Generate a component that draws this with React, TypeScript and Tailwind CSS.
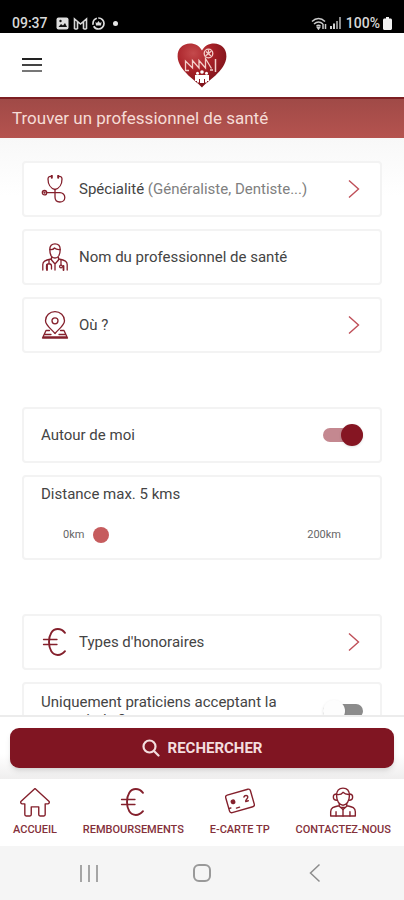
import { useState } from "react";
import type { ReactNode } from "react";

const HeartLogo = () => (
  <svg viewBox="0 0 50 45" className="h-[45px] w-[50px]" role="img" aria-label="Logo">
    <defs>
      <radialGradient id="heart" cx="32%" cy="22%" r="75%">
        <stop offset="0" stopColor="#c44a4c" />
        <stop offset="0.5" stopColor="#a92128" />
        <stop offset="1" stopColor="#7f141b" />
      </radialGradient>
    </defs>
    <path
      d="M25 44.5C21 39 1 28 .6 13.5.4 5.500 6 .6 13 .6c5.500 0 9.500 2.600 12 7 2.500-4.400 6.500-7 12-7 7 0 12.600 4.900 12.400 12.900C49 28 29 39 25 44.500z"
      fill="url(#heart)"
    />
    <g fill="none" stroke="#f3cfca" strokeWidth="1.300">
      <path d="M8.500 27.500V18l7 7v-7.500l6.500 7.500v-7.500l6.500 7.500V15.500l6 10" />
      <path d="M38.500 16v13" strokeWidth="1.500" />
      <path d="M8 27.500h4M33 27h3" />
      <circle cx="31.500" cy="10.500" r="4.300" />
      <path d="M28.500 13l6-5M29 8.500l5 4.500M31.500 6.500v4" />
    </g>
    <g fill="#fff">
      <circle cx="20.500" cy="30.200" r="1.500" />
      <circle cx="25" cy="29" r="1.800" />
      <circle cx="29.500" cy="30.200" r="1.500" />
      <path d="M18 32h14v6h-2v1.500h-2V36h-1v4h-4v-4h-1v3.500h-2V38h-2z" />
    </g>
  </svg>
);

const Icon = ({ children, className = "h-7 w-7" }: { children: ReactNode; className?: string }) => (
  <svg
    viewBox="0 0 28 28"
    className={`${className} shrink-0`}
    fill="none"
    stroke="#84202c"
    strokeWidth="1.300"
    strokeLinecap="round"
    strokeLinejoin="round"
    aria-hidden="true"
  >
    {children}
  </svg>
);

const StethoscopeIcon = () => (
  <Icon>
    <path d="M10.500 1.500c-2-.6-3.500.4-3.500 2.500 0 5 2.500 9.500 7 10.500 4.500-1 7-5.500 7-10.500 0-2.100-1.500-3.100-3.500-2.500" />
    <path d="M10.800.8v2M17.200.8v2" strokeWidth="2" />
    <path d="M14 14.500v7.500c0 3 2 5 4.800 5s5-2 5-4.600-2.200-4.700-4.800-4.700H5.500" />
    <circle cx="3.500" cy="17.700" r="2.200" />
    <circle cx="3.500" cy="17.700" r=".5" />
  </Icon>
);

const DoctorIcon = () => (
  <Icon>
    <path d="M8.800 6.500C8.800 2.700 10.800.8 14 .8s5.200 1.900 5.200 5.700c0 5-2 8.500-5.200 8.500s-5.200-3.500-5.200-8.500z" />
    <path d="M9 6.500c2 .3 3.500-.2 4.500-1.500 1.200 1.200 3 1.700 5.500 1.500" />
    <path d="M1.800 27v-5.500c0-3 2-4.200 8.400-5.500M26.200 27v-5.500c0-3-2-4.200-8.400-5.500" />
    <path d="M10.500 14.500V17l3.500 4 3.500-4v-2.500M14 21v6" />
    <path d="M8 17v3.500M5.500 26v-3c0-3 5-3 5 0v3M20 17v5" />
    <path d="M6 27v-5M22.500 27v-4" strokeWidth="1.800" />
    <circle cx="20" cy="23.500" r="1.400" />
  </Icon>
);

const PlaceIcon = () => (
  <Icon>
    <path d="M14 22.500C11 18.500 4.500 14.500 4.500 9.700a9.500 9 0 0119 0c0 4.800-6.500 8.800-9.500 12.800z" />
    <circle cx="14" cy="9.800" r="3" />
    <path d="M8.500 19.500H5L1.500 27h25L23 19.500h-3.500M4 23.500h6M18 23.500h6M2 26h24" />
  </Icon>
);

const EuroIcon = () => (
  <Icon>
    <path d="M24 4.800C22 2.300 19.700 1 16.800 1 11.200 1 8 6.500 8 14s3.200 13 8.800 13c2.900 0 5.200-1.300 7.200-3.800" strokeWidth="1.900" />
    <path d="M2.500 11.500h13.500M2.500 16.500h13.500" />
  </Icon>
);

const HomeIcon = () => (
  <Icon className="h-[30px] w-[30px]">
    <path d="M14 1.500L.8 13.500c-.4 1 .2 2.300 1.400 2.200h2.300v10c0 .8.400 1.300 1.200 1.300h3.600c.8 0 1.200-.5 1.200-1.300v-7.200h7v7.200c0 .8.400 1.300 1.200 1.300h3.600c.8 0 1.200-.5 1.200-1.300v-10h2.300c1.200.1 1.800-1.200 1.400-2.200z" />
  </Icon>
);

const CardIcon = () => (
  <Icon className="h-[30px] w-[30px]">
    <g transform="rotate(-16 14 13)">
      <rect x="2" y="4.500" width="24" height="17" rx="2" />
      <circle cx="7.500" cy="12" r="1.600" fill="#84202c" />
      <path d="M18.500 10.500c1-1.500 4-1 3.500 1s-3 1.500-3 3.500h2.500M2.500 17h1.500M9 18.500h3" />
    </g>
  </Icon>
);

const AdvisorIcon = () => (
  <Icon className="h-[30px] w-[30px]">
    <path d="M8 8C8 3.500 10.300 1 14 1s6 2.500 6 7c0 5-2.500 9-6 9s-6-4-6-9z" />
    <path d="M8 7c3 .5 5-.5 6-2 1.500 1.500 3.500 2.200 6 2" />
    <path d="M8 6.500c-2 0-3 1-3 2.800s1 3 3.300 3M20 6.500c2 0 3 1 3 2.800s-1 3-3.300 3" />
    <path d="M10.500 15.500V18L14 21l3.500-3v-2.500M10 17.500c-5 1-7.500 2-7.500 5.500v4h23v-4c0-3.500-2.500-4.500-7.500-5.500" />
    <path d="M7.500 23v4M20.500 23v4M14 21v6M12 19h4" />
  </Icon>
);

const Chevron = () => (
  <svg viewBox="0 0 12 20" className="h-5 w-3 shrink-0" fill="none" stroke="#bf4f58" strokeWidth="1.400" aria-hidden="true">
    <path d="M1 1.500L10.500 10 1 18.500" />
  </svg>
);

const StatusBar = () => (
  <div className="flex h-[33px] shrink-0 items-end justify-between bg-black px-3 pb-[2px] text-sm leading-[16px] font-medium text-[#d8d8d8]">
    <div className="flex items-center gap-1">
      <span className="mr-1">09:37</span>
      <svg viewBox="0 0 13 13" className="h-[13px] w-[13px]" aria-hidden="true">
        <rect x=".5" y=".5" width="12" height="12" rx="2" fill="#dedede" />
        <path d="M2.500 10l2.500-3 2 1.500L9 6l2 4z" fill="#111" />
        <circle cx="4.500" cy="4" r="1.200" fill="#111" />
      </svg>
      <svg viewBox="0 0 15 13" className="h-[13px] w-[15px]" fill="none" stroke="#d8d8d8" strokeWidth="1.600" aria-hidden="true">
        <path d="M1.500 12V2l6 5 6-5v10M4.500 12V5M10.500 12V5M1.500 12h3M10.500 12h3" />
      </svg>
      <svg viewBox="0 0 13 13" className="h-[13px] w-[13px]" aria-hidden="true">
        <circle cx="6.500" cy="6.500" r="5.500" fill="none" stroke="#dedede" strokeWidth="1.700" strokeDasharray="14 1.500 8 1.500" />
        <path d="M3.500 5l1.500 1 1.500-2L8 6l1.500-1-.5 3.500H4z" fill="#dedede" />
      </svg>
      <span className="ml-1 h-[5px] w-[5px] rounded-full bg-[#e6e6e6]" />
    </div>
    <div className="flex items-center gap-[3px]">
      <svg viewBox="0 0 16 13" className="h-[13px] w-4" fill="none" stroke="#c9c9c9" strokeWidth="1.500" aria-hidden="true">
        <path d="M1 4.500c4-4 9-4 13 0M3 7c3-2.700 6-2.700 9 0M5.500 9.300c1.300-1.200 2.700-1.200 4 0" />
        <path d="M6.500 10.500h2L7.500 12zM12 7v5M14.500 12V7" />
      </svg>
      <svg viewBox="0 0 11 12" className="h-3 w-[11px]" aria-hidden="true">
        <path d="M0 9h2v3H0zM3 6.500h2V12H3z" fill="#d0d0d0" />
        <path d="M6 4h2v8H6zM9 0h2v12H9z" fill="#8a8a8a" />
      </svg>
      <span className="ml-[2px]">100%</span>
      <svg viewBox="0 0 9 13" className="h-[13px] w-[9px]" aria-hidden="true">
        <path d="M3 0h3v1.500h1.500c.8 0 1.500.7 1.500 1.500v8.500c0 .8-.7 1.500-1.500 1.500h-6C.7 13 0 12.300 0 11.500V3c0-.8.700-1.500 1.500-1.500H3z" fill="#f1f1f1" />
      </svg>
    </div>
  </div>
);

const Header = () => (
  <header className="grid h-16 shrink-0 grid-cols-3 items-center bg-white px-5">
    <button type="button" aria-label="Menu" className="flex w-6 flex-col gap-1 p-[2px]">
      <span className="h-[2px] w-5 bg-[#222]" />
      <span className="h-[2px] w-5 bg-[#444]" />
      <span className="h-[2px] w-5 bg-[#777]" />
    </button>
    <div className="flex justify-center">
      <HeartLogo />
    </div>
  </header>
);

const cardClass = "w-full rounded-[4px] border-2 border-[#f3f3f3] bg-white text-[15px] leading-5 text-[#444]";

type PickerProps = { icon: ReactNode; children: ReactNode };

const PickerRow = ({ icon, children }: PickerProps) => (
  <button type="button" className={`${cardClass} flex h-14 items-center gap-[10px] pr-5 pl-[17px] text-left`}>
    {icon}
    <span className="flex-1">{children}</span>
    <Chevron />
  </button>
);

type SwitchProps = { id: string; label: string; defaultChecked?: boolean };

const SwitchRow = ({ id, label, defaultChecked }: SwitchProps) => (
  <div className={`${cardClass} flex min-h-14 items-center justify-between px-[17px] py-[9px]`}>
    <label htmlFor={id} className="max-w-[250px] leading-[18px]">
      {label}
    </label>
    <input
      id={id}
      type="checkbox"
      defaultChecked={defaultChecked}
      className="flex h-[14px] w-10 shrink-0 appearance-none items-center rounded-full bg-[#8c8c8c] after:block after:h-[22px] after:w-[22px] after:shrink-0 after:rounded-full after:bg-[#fdfdfd] after:shadow-sm checked:bg-[#c48890] checked:after:ml-[18px] checked:after:bg-[#851522]"
    />
  </div>
);

const DistanceCard = () => {
  const [distance, setDistance] = useState(5);

  return (
    <div className={`${cardClass} flex h-[85px] flex-col gap-[23px] px-[17px] pt-[7px]`}>
      <label htmlFor="distance">Distance max. {distance} kms</label>
      <div className="flex items-center gap-1 px-[22px] text-[11px] leading-4 text-[#666]">
        <span>0km</span>
        <input
          id="distance"
          type="range"
          min={0}
          max={200}
          value={distance}
          onChange={(e) => setDistance(Number(e.target.value))}
          className="h-4 min-w-0 flex-1 appearance-none bg-transparent [&::-webkit-slider-thumb]:h-4 [&::-webkit-slider-thumb]:w-4 [&::-webkit-slider-thumb]:appearance-none [&::-webkit-slider-thumb]:rounded-full [&::-webkit-slider-thumb]:bg-[#c65c5e]"
        />
        <span>200km</span>
      </div>
    </div>
  );
};

const navItems = [
  { label: "ACCUEIL", icon: <HomeIcon /> },
  { label: "REMBOURSEMENTS", icon: <EuroIcon /> },
  { label: "E-CARTE TP", icon: <CardIcon /> },
  { label: "CONTACTEZ-NOUS", icon: <AdvisorIcon /> },
];

const BottomNav = () => (
  <nav className="flex h-[67px] shrink-0 justify-between bg-white px-[13px] pt-2">
    {navItems.map((item) => (
      <a key={item.label} href="#" className="flex flex-col items-center gap-1 text-[11px] leading-[18px] font-medium text-[#84303a]">
        <span className="flex h-[30px] items-center">{item.icon}</span>
        {item.label}
      </a>
    ))}
  </nav>
);

const SystemBar = () => (
  <div className="grid h-[54px] shrink-0 grid-cols-3 items-center justify-items-center bg-[#f5f5f5] px-8">
    <button type="button" aria-label="Applications récentes" className="flex gap-[6px]">
      <span className="h-[17px] w-[2px] bg-[#a5a5a5]" />
      <span className="h-[17px] w-[2px] bg-[#a5a5a5]" />
      <span className="h-[17px] w-[2px] bg-[#a5a5a5]" />
    </button>
    <button type="button" aria-label="Accueil du téléphone" className="h-[18px] w-[18px] rounded-[6px] border-2 border-[#999]" />
    <button type="button" aria-label="Retour">
      <svg viewBox="0 0 12 20" className="h-5 w-3" fill="none" stroke="#8c8c8c" strokeWidth="1.500" aria-hidden="true">
        <path d="M10.500 1.500L1.500 10l9 8.500" />
      </svg>
    </button>
  </div>
);

export default function App() {
  return (
    <div className="flex h-screen flex-col overflow-hidden bg-white font-[Roboto,'Liberation_Sans',sans-serif]">
      <StatusBar />
      <Header />
      <h1 className="h-[41px] shrink-0 border-t-2 border-[#7d1f22] bg-linear-to-b from-[#a04a47] to-[#b5534f] pl-3 text-[17px] leading-[38px] text-[#f6dcd6]">
        Trouver un professionnel de santé
      </h1>

      <main className="flex min-h-0 flex-1 flex-col gap-[54px] overflow-hidden bg-linear-to-b from-[#f8f8f8] to-white to-10% px-[22px] pt-[23px]">
        <section className="flex flex-col gap-3">
          <PickerRow icon={<StethoscopeIcon />}>
            Spécialité <span className="text-[#808080]">(Généraliste, Dentiste...)</span>
          </PickerRow>
          <div className={`${cardClass} flex h-14 items-center gap-[10px] pr-5 pl-[17px]`}>
            <DoctorIcon />
            <input
              type="text"
              aria-label="Nom du professionnel de santé"
              placeholder="Nom du professionnel de santé"
              className="min-w-0 flex-1 outline-none placeholder:text-[#444]"
            />
          </div>
          <PickerRow icon={<PlaceIcon />}>Où ?</PickerRow>
        </section>

        <section className="flex flex-col gap-3">
          <SwitchRow id="nearby" label="Autour de moi" defaultChecked />
          <DistanceCard />
        </section>

        <section className="flex flex-col gap-3">
          <PickerRow icon={<EuroIcon />}>Types d'honoraires</PickerRow>
          <SwitchRow id="vitale" label="Uniquement praticiens acceptant la carte vitale ?" />
        </section>
      </main>

      <div className="h-16 shrink-0 border-t-2 border-[#ececec] bg-linear-to-b from-white from-60% to-[#efeeee] px-[10px] pt-[11px]">
        <button type="button" className="flex h-10 w-full items-center justify-center gap-2 rounded-[9px] bg-[#801522] text-[15px] font-bold text-[#f3dedf] shadow-md">
          <svg viewBox="0 0 18 18" className="h-[18px] w-[18px]" fill="none" stroke="currentColor" strokeWidth="2.200" strokeLinecap="round" aria-hidden="true">
            <circle cx="7.500" cy="7.500" r="6" />
            <path d="M12 12l4.500 4.500" />
          </svg>
          RECHERCHER
        </button>
      </div>

      <BottomNav />
      <SystemBar />
    </div>
  );
}
